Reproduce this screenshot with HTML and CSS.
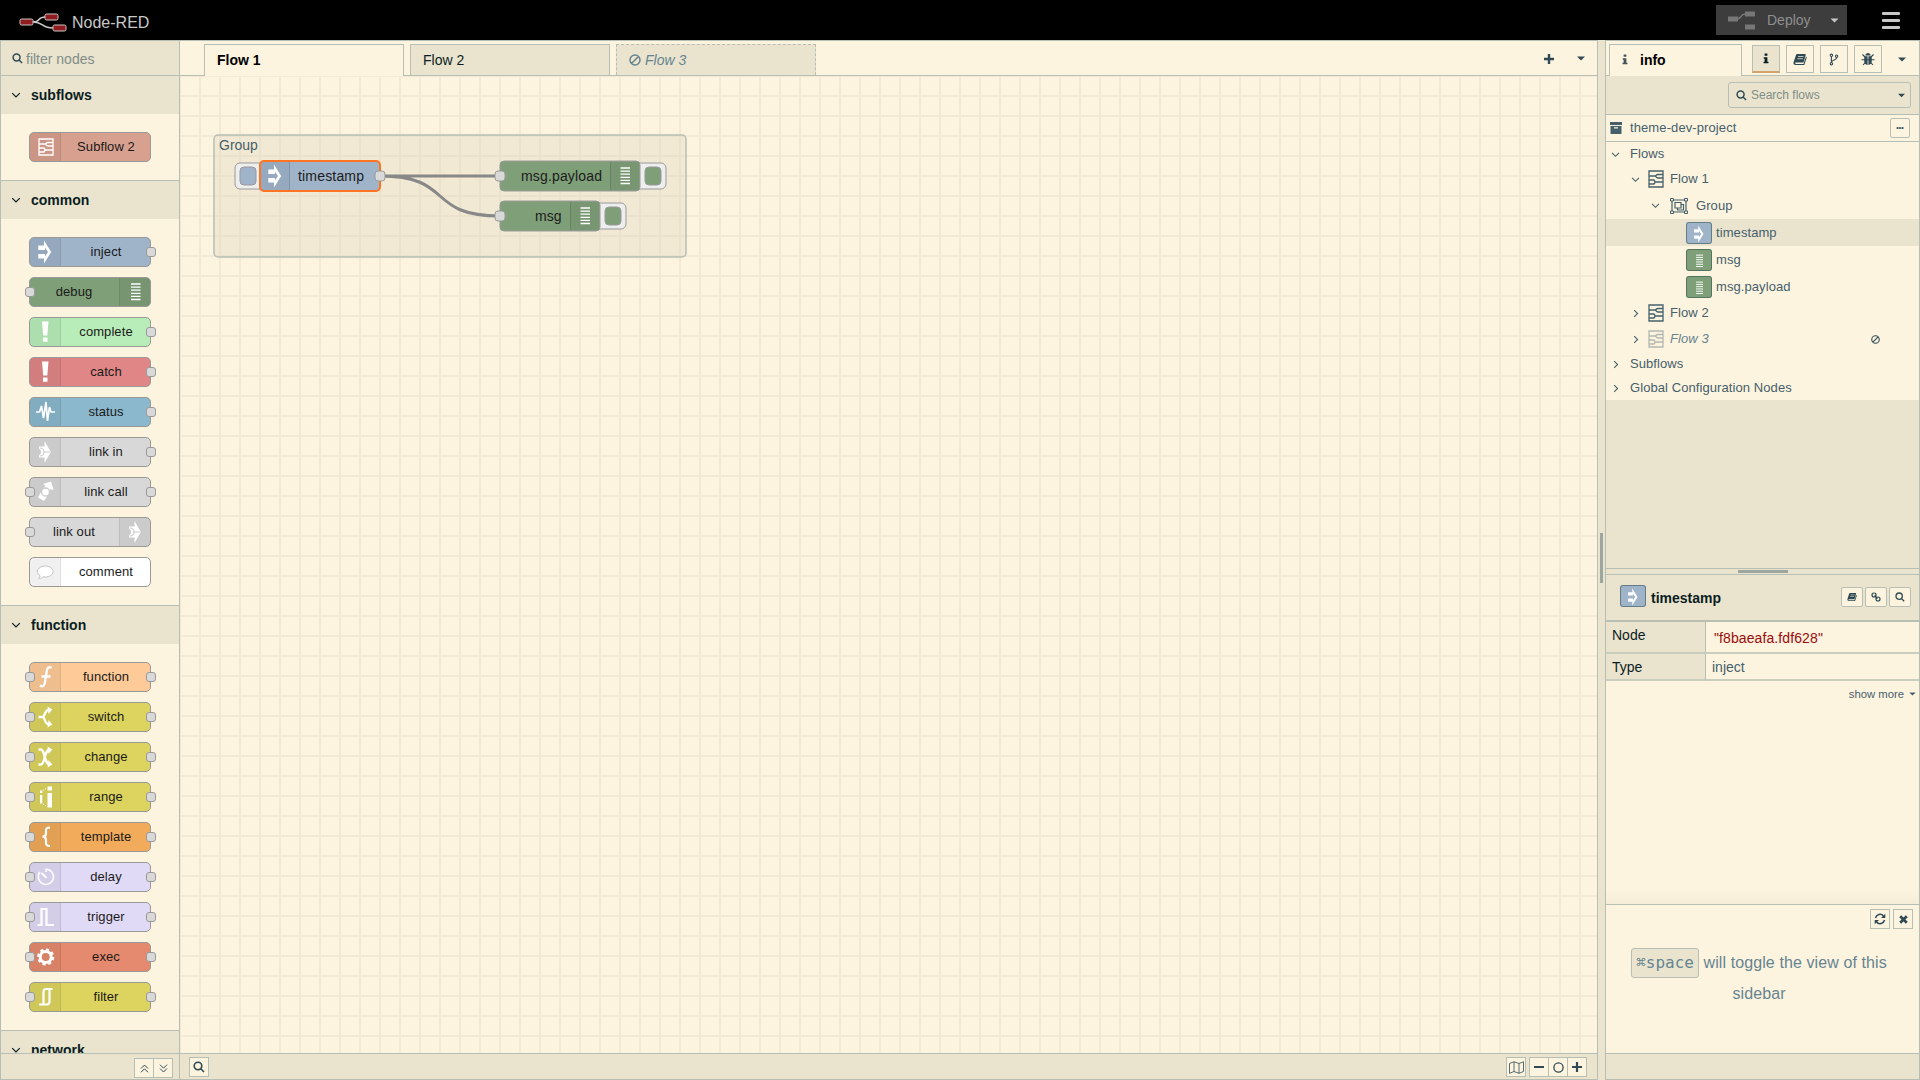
FILE: index.html
```html
<!DOCTYPE html>
<html lang="en">
<head>
<meta charset="utf-8">
<title>Node-RED</title>
<link rel="stylesheet" href="styles.css">
</head>
<body>
<svg class="defs" width="0" height="0">
  <symbol id="inject" viewBox="0 0 30 30"><path fill="#fff" d="M14 3.500L21.200 15L14 26.500V21.500H8.300V17H15V19.500L18 15L15 10.500V13H8.300V8.500H14Z"/></symbol>
  <symbol id="debug" viewBox="0 0 30 30"><path stroke="#fff" stroke-width="1.300" d="M11 7H20.500M11 10.100H20.500M11 13.200H20.500M11 16.300H20.500M11 19.400H20.500M11 22.500H20.500"/></symbol>
  <symbol id="bang" viewBox="0 0 30 30"><path fill="#fff" d="M12 4.500H18.500L17.300 18.500H13.200ZM13 20.500H17.500V24.800H13Z"/></symbol>
  <symbol id="status" viewBox="0 0 30 30"><path fill="none" stroke="#fff" stroke-width="1.700" stroke-linejoin="bevel" d="M6 15H9.500L11.500 9L13.500 21L16 5L17.500 24L19.500 10L21 15H25"/></symbol>
  <symbol id="link" viewBox="0 0 30 30"><path fill="#fff" d="M14.500 4L20.800 15L14.500 26V20.500H9V18.500A4 4 0 0 0 9 11.500V9.500H14.500Z"/><path fill="none" stroke="#cbcbcb" stroke-width="1.200" d="M10 11A4 4 0 0 1 10 19M14 15H20"/></symbol>
  <symbol id="linkcall" viewBox="0 0 30 30"><path fill="#fff" d="M13 7L21 4.500L23.500 13L20.500 12L16 21L14 24L8 20.500L10 17L12.500 12L15.500 8.500Z"/><circle cx="15.500" cy="15" r="4" fill="#fff" stroke="#cbcbcb" stroke-width="1.300"/></symbol>
  <symbol id="comment" viewBox="0 0 30 30"><path fill="#fff" stroke="#c4c4c4" d="M15.500 9C20 9 23 11.500 23 14.500S20 20 15.500 20L13 19.800C11.500 21.500 10 21.500 8.500 21.500C10 20.500 10.200 19.500 10 18.500C5 16 7.500 9 15.500 9Z"/></symbol>
  <symbol id="function" viewBox="0 0 30 30"><path fill="none" stroke="#fff" stroke-width="2.300" d="M21.500 6C19 4.200 17.300 5.500 16.800 9L15 20C14.400 24 12.700 25.200 10 23.500M11.500 14.500H20.500"/></symbol>
  <symbol id="switch" viewBox="0 0 30 30"><path fill="none" stroke="#fff" stroke-width="2.300" d="M8.500 15H13C15 15 14 7.500 20 7.500M13 15C15 15 14 22.500 20 22.500"/><path fill="#fff" d="M17.500 4.500L22.300 7.500L18.500 12ZM18.500 18L22.300 22.500L17.500 25.500Z"/></symbol>
  <symbol id="change" viewBox="0 0 30 30"><path fill="none" stroke="#fff" stroke-width="2.300" d="M8.500 7.500H11C15 7.500 14 22.500 20 22.500M8.500 22.500H11C15 22.500 14 7.500 20 7.500"/><path fill="#fff" d="M17.500 4.500L22.300 7.500L18.500 12ZM18.500 18L22.300 22.500L17.500 25.500Z"/></symbol>
  <symbol id="range" viewBox="0 0 30 30"><path fill="#fff" d="M17.500 4.500H22V8.500H17.500ZM17.500 11H22V25.500H17.500ZM10 8.500H12.300V11H10ZM10 13H12.300V21.500H10Z"/><path stroke="#fff" stroke-dasharray="1.200 1.200" d="M13 8.500L17 6M13 22L17 24.500"/></symbol>
  <symbol id="template" viewBox="0 0 30 30"><path fill="none" stroke="#fff" stroke-width="2.200" d="M20 5.500C16.500 5.500 16 6.500 16 8.500V11.500C16 13.500 15 14.700 12.500 14.700C15 14.700 16 16 16 18V21C16 23 16.500 24 20 24"/></symbol>
  <symbol id="delay" viewBox="0 0 30 30"><path fill="none" stroke="#fff" stroke-width="1.500" d="M16 10V7.200A7.600 7.600 0 1 1 10 10"/><path stroke="#fff" stroke-width="2" stroke-linecap="round" d="M12 11.500L16 15.200"/></symbol>
  <symbol id="trigger" viewBox="0 0 30 30"><path fill="none" stroke="#fff" stroke-width="2.200" d="M7.500 23H11.500V7H16.500V23H24"/></symbol>
  <symbol id="gear" viewBox="0 0 30 30"><circle cx="15.700" cy="15" r="5.500" fill="none" stroke="#fff" stroke-width="3"/><circle cx="15.700" cy="15" r="7.500" fill="none" stroke="#fff" stroke-width="2.200" stroke-dasharray="3.200 2.690"/></symbol>
  <symbol id="filter" viewBox="0 0 30 30"><path fill="none" stroke="#fff" stroke-width="2.200" d="M9 22.500H13.500V10Q13.500 7 16 7H22.500M13.500 22.500H17Q19.500 22.500 19.500 19V7"/></symbol>
  <symbol id="flow" viewBox="0 0 16 18"><path fill="none" stroke="currentColor" stroke-width="1.300" d="M1 1H15V17H1ZM1 6H7C8 6 8 4.500 10 4.500H15M15 8H10C8 8 8 6 7 6M1 10H6Q8 12 6 14H1M7.500 12H15"/></symbol>
  <symbol id="group" viewBox="0 0 20 18"><path fill="none" stroke="currentColor" stroke-width="1.200" d="M3 3H17V15H3ZM6 5.500H12V11H6ZM12 7.500H14.500V13H8.500V11"/><path fill="#fdf4e0" stroke="currentColor" d="M1.500 1.500H4.500V4H1.500ZM15.500 1.500H18.500V4H15.500ZM1.500 14H4.500V16.500H1.500ZM15.500 14H18.500V16.500H15.500Z"/></symbol>
  <symbol id="search" viewBox="0 0 12 12"><path fill="none" stroke="currentColor" stroke-width="1.600" d="M8 8L11 11M5 1.200A3.800 3.800 0 1 0 5 8.800A3.800 3.800 0 1 0 5 1.200Z"/></symbol>
  <symbol id="down" viewBox="0 0 10 10"><path fill="none" stroke="currentColor" stroke-width="1.200" d="M1.200 3.200L5 7L8.800 3.200"/></symbol>
  <symbol id="right" viewBox="0 0 10 10"><path fill="none" stroke="currentColor" stroke-width="1.200" d="M3.500 1.200L7.300 5L3.500 8.800"/></symbol>
  <symbol id="caret" viewBox="0 0 8 5"><path fill="currentColor" d="M0 .5H8L4 4.500Z"/></symbol>
  <symbol id="ban" viewBox="0 0 12 12"><path fill="none" stroke="currentColor" stroke-width="1.500" d="M6 1A5 5 0 1 0 6 11A5 5 0 1 0 6 1M2.500 9.500L9.500 2.500"/></symbol>
  <symbol id="info" viewBox="0 0 6 12"><path fill="currentColor" d="M1.500 .5H4.500V3H1.500ZM.5 4.500H4.500V9.500H5.700V11.300H.3V9.500H1.500V6.200H.5Z"/></symbol>
  <symbol id="book" viewBox="0 0 14 13"><path fill="currentColor" d="M4 1H12Q13 1 12.700 2L10.500 9.500H3Q1.500 9.500 2 10.200L3 11H10.500L13 3.500Q14 4 13.600 5L11.300 12H3Q0 12 .5 9.500L3 2Q3.300 1 4 1Z"/><path stroke="#eae4cf" stroke-width=".8" d="M5 3.500H10.500M4.400 5.700H9.900"/></symbol>
  <symbol id="branch" viewBox="0 0 10 14"><g fill="none" stroke="currentColor" stroke-width="1.200"><circle cx="2.200" cy="2.500" r="1.300"/><circle cx="2.200" cy="11.500" r="1.300"/><circle cx="7.800" cy="3.500" r="1.300"/><path d="M2.200 4V10M7.800 5C7.800 8 2.500 7 2.200 10"/></g></symbol>
  <symbol id="bug" viewBox="0 0 14 14"><path fill="currentColor" d="M4.300 3.500C4.500 0 9.500 0 9.700 3.500ZM3.500 4.300H6.600V13C2.500 12.500 3 8 3.500 4.300ZM7.400 4.300H10.500C11 8 11.500 12.500 7.400 13Z"/><path fill="none" stroke="currentColor" stroke-width="1.100" d="M1.500 2.500L4 5M12.500 2.500L10 5M.5 7.800H13.500M2 13L4.500 10.300M12 13L9.500 10.300"/></symbol>
  <symbol id="chain" viewBox="0 0 10 10"><path fill="none" stroke="currentColor" stroke-width="1.200" d="M1 3Q1 1 3 1T5 3T3 5T1 3M5 7Q5 5 7 5T9 7T7 9T5 7M3.500 3.500L6.500 6.500"/></symbol>
</svg>

<header class="topbar">
  <div class="brand">
    <svg width="49" height="22" viewBox="0 0 49 22"><path fill="none" stroke="#c8c8c8" stroke-width="1.500" d="M14 10C22 10 18 5 26 5M14 10C25 10 22 16 34 16"/><g fill="#8f1d1f" stroke="#c8c8c8"><rect x="1" y="7" width="13" height="6" rx="1.500"/><rect x="26" y="2" width="13" height="6" rx="1.500"/><rect x="34" y="13" width="13" height="6" rx="1.500"/></g></svg>
    <span>Node-RED</span>
  </div>
  <div class="top-actions">
    <div class="deploy"><svg width="30" height="20" viewBox="0 0 30 20"><path fill="none" stroke="#777" stroke-width="1.500" d="M10 9C15 9 13 4 18 4"/><path fill="#777" d="M1 6.500H11V11.500H1ZM18 1.500H28V6.500H18ZM18 14.500H28V19.500H18Z"/></svg><span>Deploy</span><svg class="deploy-caret" width="9" height="5"><use href="#caret"/></svg></div>
    <div class="burger"><i></i><i></i><i></i></div>
  </div>
</header>

<main class="app">
  <aside class="palette">
    <div class="palette-search"><svg width="11" height="11"><use href="#search"/></svg><span>filter nodes</span></div>
    <div class="palette-list">
      <section class="category">
        <h2><svg width="10" height="10"><use href="#down"/></svg>subflows</h2>
        <div class="nodes">
          <div class="node subflow"><span class="icon"><svg class="subicon" width="16" height="18"><use href="#flow"/></svg></span><span class="label">Subflow 2</span></div>
        </div>
      </section>
      <section class="category">
        <h2><svg width="10" height="10"><use href="#down"/></svg>common</h2>
        <div class="nodes">
          <div class="node blue out"><span class="icon"><svg><use href="#inject"/></svg></span><span class="label">inject</span></div>
          <div class="node green in flip"><span class="icon"><svg><use href="#debug"/></svg></span><span class="label">debug</span></div>
          <div class="node mint out"><span class="icon"><svg><use href="#bang"/></svg></span><span class="label">complete</span></div>
          <div class="node red out"><span class="icon"><svg><use href="#bang"/></svg></span><span class="label">catch</span></div>
          <div class="node teal out"><span class="icon"><svg><use href="#status"/></svg></span><span class="label">status</span></div>
          <div class="node grey out"><span class="icon"><svg><use href="#link"/></svg></span><span class="label">link in</span></div>
          <div class="node grey in out"><span class="icon"><svg><use href="#linkcall"/></svg></span><span class="label">link call</span></div>
          <div class="node grey in flip"><span class="icon"><svg><use href="#link"/></svg></span><span class="label">link out</span></div>
          <div class="node white"><span class="icon"><svg><use href="#comment"/></svg></span><span class="label">comment</span></div>
        </div>
      </section>
      <section class="category">
        <h2><svg width="10" height="10"><use href="#down"/></svg>function</h2>
        <div class="nodes">
          <div class="node peach in out"><span class="icon"><svg><use href="#function"/></svg></span><span class="label">function</span></div>
          <div class="node olive in out"><span class="icon"><svg><use href="#switch"/></svg></span><span class="label">switch</span></div>
          <div class="node olive in out"><span class="icon"><svg><use href="#change"/></svg></span><span class="label">change</span></div>
          <div class="node olive in out"><span class="icon"><svg><use href="#range"/></svg></span><span class="label">range</span></div>
          <div class="node orange in out"><span class="icon"><svg><use href="#template"/></svg></span><span class="label">template</span></div>
          <div class="node lilac in out"><span class="icon"><svg><use href="#delay"/></svg></span><span class="label">delay</span></div>
          <div class="node lilac in out"><span class="icon"><svg><use href="#trigger"/></svg></span><span class="label">trigger</span></div>
          <div class="node coral in out"><span class="icon"><svg><use href="#gear"/></svg></span><span class="label">exec</span></div>
          <div class="node olive in out"><span class="icon"><svg><use href="#filter"/></svg></span><span class="label">filter</span></div>
        </div>
      </section>
      <section class="category"><h2><svg width="10" height="10"><use href="#down"/></svg>network</h2></section>
    </div>
    <footer class="bar palette-bar">
      <div class="btns">
        <span class="btn"><svg width="9" height="9" viewBox="0 0 9 9"><path fill="none" stroke="currentColor" d="M1 4.500L4.500 1L8 4.500M1 8.300L4.500 4.800L8 8.300"/></svg></span>
        <span class="btn"><svg width="9" height="9" viewBox="0 0 9 9"><path fill="none" stroke="currentColor" d="M1 .7L4.500 4.200L8 .7M1 4.500L4.500 8L8 4.500"/></svg></span>
      </div>
    </footer>
  </aside>

  <section class="workspace">
    <nav class="tabs">
      <div class="tab active">Flow 1</div>
      <div class="tab">Flow 2</div>
      <div class="tab disabled"><svg width="12" height="12"><use href="#ban"/></svg>Flow 3</div>
      <div class="tab-tools">
        <svg width="10" height="10" viewBox="0 0 10 10"><path stroke="currentColor" stroke-width="2.400" d="M5 0V10M0 5H10"/></svg>
        <svg width="8" height="5"><use href="#caret"/></svg>
      </div>
    </nav>
    <div class="canvas">
      <svg class="flow-canvas" width="1417" height="977" viewBox="180 76 1417 977">
        <rect class="group-box" x="214" y="135" width="472" height="122" rx="4"/>
        <text class="group-label" x="219" y="150">Group</text>
        <path class="wire" d="M380 176H500M380 176C455 176 425 216 500 216"/>
        <g class="button"><rect x="235" y="163" width="32" height="26" rx="5"/><rect x="240" y="167" width="16" height="18" rx="4" fill="#9fb3c9"/></g>
        <g class="button"><rect x="630" y="163" width="36" height="26" rx="5"/><rect x="645" y="167" width="16" height="18" rx="4" fill="#7f9f78"/></g>
        <g class="button"><rect x="590" y="203" width="36" height="26" rx="5"/><rect x="605" y="207" width="16" height="18" rx="4" fill="#7f9f78"/></g>
        <rect class="body" x="260" y="161" width="120" height="30" rx="4" fill="#9fb3c9"/>
        <path class="shade" d="M261 162H289.500V190H261Z"/><path class="divider" d="M289.500 162V190"/>
        <use href="#inject" x="260" y="161" width="30" height="30"/>
        <rect class="selected" x="260" y="161" width="120" height="30" rx="4"/>
        <text x="298" y="181" textLength="66">timestamp</text>
        <rect class="body" x="500" y="161" width="140" height="30" rx="4" fill="#7f9f78"/>
        <path class="shade" d="M610.500 162H639V190H610.500Z"/><path class="divider" d="M610.500 162V190"/>
        <use href="#debug" x="609.500" y="161" width="30" height="30"/>
        <text x="521" y="181" textLength="81">msg.payload</text>
        <rect class="body" x="500" y="201" width="100" height="30" rx="4" fill="#7f9f78"/>
        <path class="shade" d="M570.500 202H599V230H570.500Z"/><path class="divider" d="M570.500 202V230"/>
        <use href="#debug" x="569.500" y="201" width="30" height="30"/>
        <text x="535" y="221">msg</text>
        <g class="port"><rect x="375" y="171" width="10" height="10" rx="3"/><rect x="495" y="171" width="10" height="10" rx="3"/><rect x="495" y="211" width="10" height="10" rx="3"/></g>
      </svg>
    </div>
    <footer class="bar workspace-bar">
      <span class="btn single"><svg width="12" height="12"><use href="#search"/></svg></span>
      <div class="right-tools">
        <span class="btn single"><svg width="15" height="13" viewBox="0 0 15 13"><path fill="none" stroke="currentColor" stroke-width=".8" d="M.5 2.500L5 .8L10 2.500L14.500 .8V10.500L10 12.300L5 10.500L.5 12.300ZM5 .8V10.500M10 2.500V12.300"/></svg></span>
        <div class="btns">
          <span class="btn"><svg width="10" height="10" viewBox="0 0 10 10"><path stroke="currentColor" stroke-width="2" d="M0 5H10"/></svg></span>
          <span class="btn"><svg width="11" height="11" viewBox="0 0 11 11"><circle cx="5.500" cy="5.500" r="4.600" fill="none" stroke="currentColor" stroke-width="1.300"/></svg></span>
          <span class="btn"><svg width="10" height="10" viewBox="0 0 10 10"><path stroke="currentColor" stroke-width="2.200" d="M0 5H10M5 0V10"/></svg></span>
        </div>
      </div>
    </footer>
  </section>

  <div class="splitter"><i></i></div>

  <aside class="sidebar">
    <nav class="side-tabs">
      <div class="side-tab"><svg width="6" height="11"><use href="#info"/></svg><span>info</span></div>
      <div class="side-buttons">
        <span class="on"><svg width="6" height="11"><use href="#info"/></svg></span>
        <span><svg width="14" height="13"><use href="#book"/></svg></span>
        <span><svg width="10" height="13"><use href="#branch"/></svg></span>
        <span><svg width="14" height="14"><use href="#bug"/></svg></span>
      </div>
      <svg class="more-tabs" width="8" height="5"><use href="#caret"/></svg>
    </nav>
    <div class="side-search"><div class="search-box"><svg width="11" height="11"><use href="#search"/></svg><span>Search flows</span><svg class="caret" width="7" height="5"><use href="#caret"/></svg></div></div>
    <div class="project"><svg width="12" height="12" viewBox="0 0 12 12"><path fill="currentColor" fill-rule="evenodd" d="M0 0H12V3H0ZM.5 4H11.500V12H.5ZM4 5.200V6.500H8V5.200Z"/></svg><span>theme-dev-project</span><b>•••</b></div>
    <ul class="tree">
      <li class="l0"><svg width="9" height="9"><use href="#down"/></svg><span>Flows</span></li>
      <li class="l1"><svg width="9" height="9"><use href="#down"/></svg><svg class="ficon" width="16" height="18"><use href="#flow"/></svg><span>Flow 1</span></li>
      <li class="l2"><svg width="9" height="9"><use href="#down"/></svg><svg class="gicon" width="20" height="18"><use href="#group"/></svg><span>Group</span></li>
      <li class="l3 current"><i class="chip blue"><svg width="22" height="22"><use href="#inject"/></svg></i><span>timestamp</span></li>
      <li class="l3"><i class="chip green"><svg width="22" height="22"><use href="#debug"/></svg></i><span>msg</span></li>
      <li class="l3"><i class="chip green"><svg width="22" height="22"><use href="#debug"/></svg></i><span>msg.payload</span></li>
      <li class="l1"><svg width="9" height="9"><use href="#right"/></svg><svg class="ficon" width="16" height="18"><use href="#flow"/></svg><span>Flow 2</span></li>
      <li class="l1 off"><svg width="9" height="9"><use href="#right"/></svg><svg class="ficon" width="16" height="18"><use href="#flow"/></svg><span>Flow 3</span><svg class="ban" width="9" height="9"><use href="#ban"/></svg></li>
      <li class="l0"><svg width="9" height="9"><use href="#right"/></svg><span>Subflows</span></li>
      <li class="l0"><svg width="9" height="9"><use href="#right"/></svg><span>Global Configuration Nodes</span></li>
    </ul>
    <div class="handle"><i></i></div>
    <div class="detail-head">
      <i class="chip blue"><svg width="22" height="22"><use href="#inject"/></svg></i><strong>timestamp</strong>
      <div class="detail-btns">
        <span><svg width="10" height="10"><use href="#book"/></svg></span>
        <span><svg width="10" height="10"><use href="#chain"/></svg></span>
        <span><svg width="10" height="10"><use href="#search"/></svg></span>
      </div>
    </div>
    <dl class="props">
      <dt>Node</dt><dd class="id">"f8baeafa.fdf628"</dd>
      <dt>Type</dt><dd>inject</dd>
    </dl>
    <div class="show-more">show more <svg width="7" height="4"><use href="#caret"/></svg></div>
    <div class="tips">
      <div class="tips-btns">
        <span class="btn single"><svg width="12" height="12" viewBox="0 0 12 12"><path fill="none" stroke="currentColor" stroke-width="1.500" d="M1.500 5A4.600 4.600 0 0 1 9.500 3M10.500 7A4.600 4.600 0 0 1 2.500 9"/><path fill="currentColor" d="M11.300 .8V5H7ZM.7 11.200V7H5Z"/></svg></span>
        <span class="btn single"><svg width="9" height="9" viewBox="0 0 9 9"><path stroke="currentColor" stroke-width="2.700" d="M1.200 1.200L7.800 7.800M7.800 1.200L1.200 7.800"/></svg></span>
      </div>
      <p><kbd>⌘space</kbd> will toggle the view of this sidebar</p>
    </div>
    <footer class="bar"></footer>
  </aside>
</main>
</body>
</html>
```

FILE: styles.css
```css
:root {
  --bg: #fdf4e0;
  --panel: #eae4cf;
  --line: #b7beb4;
  --ink: #0b1d22;
  --text: #45606b;
  --icon: #2f4a54;
}
*, *::before, *::after { box-sizing: border-box; }
body {
  margin: 0;
  width: 1920px;
  height: 1080px;
  overflow: hidden;
  display: flex;
  flex-direction: column;
  background: var(--panel);
  color: var(--text);
  font: 14px/20px "Liberation Sans", Arial, sans-serif;
}
svg { display: block; flex: none; }
.defs { position: absolute; }

.topbar { height: 40px; background: #000; display: flex; justify-content: space-between; align-items: flex-start; }
.brand { display: flex; padding: 12px 0 0 19px; color: #c8c8c8; font-size: 16px; line-height: 22px; gap: 4px; }
.top-actions { display: flex; padding: 5px 20px 0 0; }
.deploy { display: flex; align-items: center; width: 131px; height: 30px; padding-left: 11px; background: #3d3d3d; color: #8f8f8f; }
.deploy span { margin-left: 10px; }
.deploy-caret { margin-left: 19px; color: #c8c8c8; }
.burger { display: grid; gap: 4px; margin: 7px 0 0 35px; height: 15px; }
.burger i { width: 18px; height: 3px; border-radius: 1px; background: #c8c8c8; }

.app { flex: 1; min-height: 0; display: grid; grid-template-columns: 180px 1418px 7px 315px; }
.palette, .workspace, .sidebar { display: flex; flex-direction: column; min-height: 0; border: 1px solid var(--line); }
.workspace { border-left: 0; }
.bar { height: 26px; flex: none; border-top: 1px solid var(--line); background: var(--panel); }

.palette { background: var(--bg); }
.palette-search { height: 35px; flex: none; padding: 1px 0 0 11px; display: flex; align-items: center; gap: 3px; background: var(--panel); border-bottom: 1px solid var(--line); color: #7f8d88; }
.palette-search svg { color: var(--icon); }
.palette-list { flex: 1; overflow: hidden; }
.category { border-bottom: 1px solid var(--line); }
.category h2 { height: 38px; margin: 0; padding: 0 0 0 10px; display: flex; align-items: center; gap: 10px; background: var(--panel); color: var(--ink); font-size: 14px; }
.nodes { display: grid; gap: 10px; padding: 18px 0 18px 28px; }
.node { position: relative; display: flex; width: 122px; height: 30px; border: 1px solid #999; border-radius: 5px; font-size: 13px; letter-spacing: .08px; color: #1a1a1a; }
.node .icon { width: 31px; flex: none; background: rgba(0, 0, 0, .06); border-right: 1px solid rgba(0, 0, 0, .08); border-radius: 4px 0 0 4px; }
.node .icon svg { width: 30px; height: 30px; margin-top: -1px; }
.node .icon .subicon { width: 16px; height: 18px; margin: 5px 0 0 8px; color: #fff; }
.node .label { flex: 1; text-align: center; line-height: 28px; padding-left: 1px; }
.flip { flex-direction: row-reverse; }
.flip .label { padding: 0 1px 0 0; }
.flip .icon { border-right: 0; border-left: 1px solid rgba(0, 0, 0, .08); border-radius: 0 4px 4px 0; }
.in::before, .out::after { content: ""; position: absolute; top: 9px; width: 10px; height: 10px; border: 1px solid #999; border-radius: 3px; background: #d9d9d9; }
.in::before { left: -5px; }
.out::after { right: -6px; }
.subflow { background: #d8a08f; }
.blue { background: #9fb3c9; }
.green { background: #7f9f78; }
.mint { background: #b8ecb8; }
.red { background: #e08686; }
.teal { background: #8bb8cc; }
.grey { background: #d8d8d8; }
.white { background: #fff; }
.peach { background: #fdca98; }
.olive { background: #ddd45f; }
.orange { background: #f1ab5b; }
.lilac { background: #e1daf6; }
.coral { background: #e58a6e; }
.palette-bar { padding: 4px 6px 0 0; display: flex; justify-content: flex-end; }
.btns { display: flex; }
.btn { width: 20px; height: 20px; display: grid; place-items: center; border: 1px solid var(--line); background: var(--bg); color: var(--icon); }
.btns .btn + .btn { margin-left: -1px; }

.workspace { background: var(--bg); }
.tabs, .side-tabs { height: 35px; flex: none; display: flex; border-bottom: 1px solid var(--line); background: var(--bg); }
.tabs { padding: 3px 12px 0 24px; gap: 6px; }
.tab { width: 200px; height: 31px; padding: 0 0 1px 12px; display: flex; align-items: center; gap: 4px; border: 1px solid var(--line); border-bottom: 0; background: var(--panel); color: var(--ink); }
.tab.active { height: 32px; padding-bottom: 2px; background: var(--bg); font-weight: bold; color: #000; }
.tab.disabled { border-style: dashed; color: #668490; font-style: italic; }
.tab-tools { margin-left: auto; padding-bottom: 2px; display: flex; align-items: center; gap: 23px; color: var(--icon); }
.canvas {
  flex: 1;
  min-height: 0;
  overflow: hidden;
  background-color: var(--bg);
  background-image: linear-gradient(#f3ead6 1px, transparent 1px 19px, #f3ead6 19px), linear-gradient(90deg, #f3ead6 1px, transparent 1px 19px, #f3ead6 19px);
  background-size: 20px 20px;
}
.flow-canvas text { font-size: 14px; fill: #1c1c1c; }
.flow-canvas .group-label { fill: #45606b; }
.group-box { fill: rgba(220, 208, 185, .3); stroke: #b7beb4; stroke-width: 1.5; }
.wire { fill: none; stroke: #888; stroke-width: 3; }
.button rect { stroke: #999; }
.button rect:first-child { fill: #eee; }
.body { stroke: #999; }
.shade { fill: rgba(0, 0, 0, .05); }
.divider { stroke: rgba(0, 0, 0, .15); }
.selected { fill: none; stroke: #ff7422; stroke-width: 2; }
.port rect { fill: #d9d9d9; stroke: #999; }
.workspace-bar { display: flex; justify-content: space-between; padding: 3px 10px 0 9px; }
.right-tools { display: flex; gap: 3px; }

.splitter { display: grid; place-items: start center; padding-top: 493px; }
.splitter i { width: 3px; height: 50px; background: #9ea79f; }

.sidebar { background: var(--bg); }
.side-tabs { padding: 3px 13px 0 3px; }
.side-tab { width: 133px; height: 32px; padding: 0 0 2px 12px; display: flex; align-items: center; gap: 12px; border: 1px solid var(--line); border-bottom: 0; color: #000; font-weight: bold; background: var(--bg); }
.side-tab svg { color: #45545a; }
.side-buttons { display: flex; gap: 6px; margin: 1px 0 0 10px; color: var(--icon); }
.side-buttons span { width: 28px; height: 28px; display: grid; place-items: center; border: 1px solid var(--line); }
.side-buttons .on { background: var(--panel); border-bottom: 2px solid #d3a36f; color: var(--ink); }
.more-tabs { margin: 13px 0 0 auto; color: var(--icon); }
.side-search { height: 39px; flex: none; padding: 6px 8px 0 0; display: flex; justify-content: flex-end; background: var(--panel); border-bottom: 1px solid var(--line); }
.search-box { width: 183px; height: 26px; padding: 0 5px 0 7px; display: flex; align-items: center; gap: 4px; border: 1px solid var(--line); border-radius: 3px; font-size: 12px; color: #7f8d88; }
.search-box svg { color: var(--icon); }
.search-box .caret { margin-left: auto; }
.project { height: 27px; flex: none; display: flex; align-items: center; gap: 8px; padding: 0 9px 0 4px; border-bottom: 1px solid var(--line); font-size: 13px; letter-spacing: .1px; }
.project b { width: 20px; height: 20px; margin-left: auto; border: 1px solid var(--line); border-radius: 2px; text-align: center; font-size: 7px; line-height: 17px; color: var(--icon); }
.tree { margin: 0; padding: 0; list-style: none; font-size: 13px; letter-spacing: .08px; }
.tree li { display: flex; align-items: center; }
.l0 { height: 24px; padding-left: 5px; gap: 10px; }
.l1 { height: 26px; padding-left: 25px; }
.l2 { height: 27px; padding-left: 45px; }
.l3 { height: 27px; padding-left: 80px; gap: 4px; }
.ficon { margin: 0 6px 0 8px; }
.gicon { margin: 0 7px 0 9px; }
.current { background: var(--panel); }
.off span { color: #668490; font-style: italic; }
.off .ficon { opacity: .4; }
.off .ban { margin: 0 39px 0 auto; color: var(--icon); }
.chip { width: 26px; height: 22px; flex: none; display: grid; place-items: center; border: 1px solid rgba(50, 80, 80, .55); border-radius: 3px; }
.handle { flex: none; height: 175px; background: var(--panel); border-bottom: 1px solid var(--line); display: flex; justify-content: center; align-items: flex-end; background-image: linear-gradient(var(--line), var(--line)); background-size: 100% 1px; background-position: 0 168px; background-repeat: no-repeat; }
.handle i { width: 50px; height: 3px; margin-bottom: 1px; background: #9ea79f; }
.detail-head { height: 47px; flex: none; padding: 10px 8px 0 14px; display: flex; background: var(--panel); border-bottom: 2px solid var(--line); }
.detail-head strong { margin: 3px 0 0 5px; color: var(--ink); }
.detail-btns { display: flex; gap: 2px; margin: 2px 0 0 auto; color: var(--icon); }
.detail-btns span { width: 22px; height: 20px; display: grid; place-items: center; border: 1px solid var(--line); border-radius: 2px; background: var(--bg); }
.props { display: grid; grid-template: 32px 27px / 100px 1fr; margin: 0; flex: none; }
.props dt, .props dd { margin: 0; border-bottom: 2px solid #c9cdbc; }
.props dt { padding: 3px 6px; border-right: 1px solid var(--line); background: var(--panel); color: var(--ink); }
.props dd { padding: 3px 6px; }
.props .id { padding: 6px 8px; letter-spacing: .1px; color: #990b0b; }
.show-more { flex: 1; padding: 3px 3px 0; display: flex; justify-content: flex-end; gap: 5px; font-size: 11.3px; background: linear-gradient(transparent calc(100% - 14px), #f6edd8); }
.show-more svg { margin-top: 8px; }
.tips { height: 149px; flex: none; padding: 4px 6px; border-top: 1px solid var(--line); font-size: 16px; letter-spacing: .1px; line-height: 30.5px; text-align: center; color: #668490; }
.tips-btns { display: flex; justify-content: flex-end; gap: 3px; }
.tips p { margin: 19px 15px 0 8px; }
kbd { display: inline-block; padding: 0 4px; height: 30px; line-height: 28px; letter-spacing: 0; border: 1px solid var(--line); border-radius: 3px; background: var(--panel); font: 16px/28px "DejaVu Sans Mono", monospace; }
```
